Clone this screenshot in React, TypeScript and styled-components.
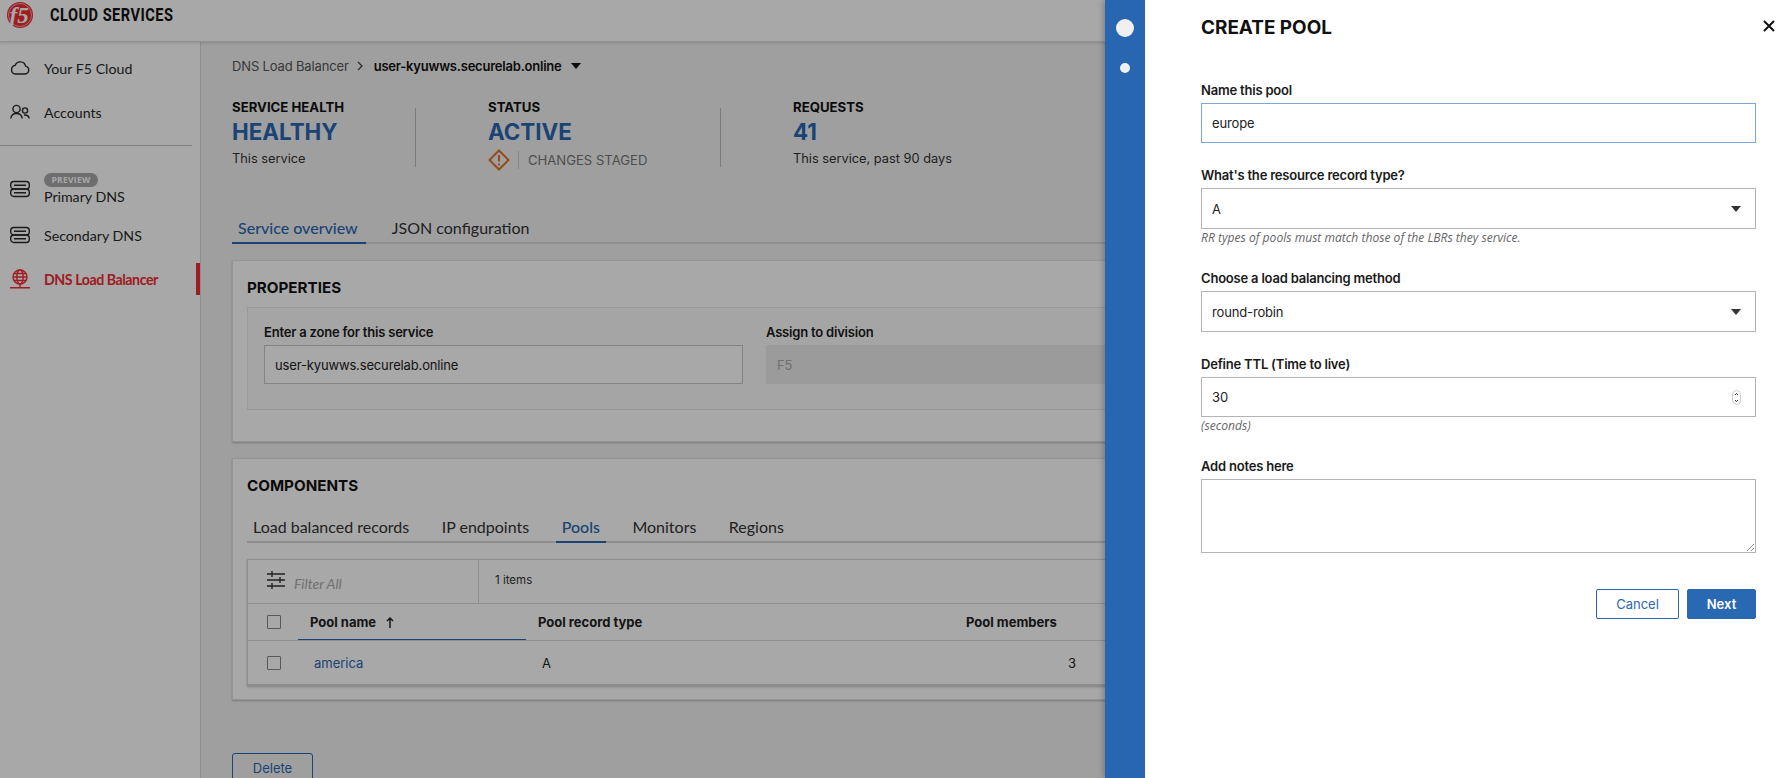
import React from "react"
import styled, { createGlobalStyle } from "styled-components"

const GlobalStyle = createGlobalStyle`
  html, body {
    margin: 0;
    height: 100%;
    overflow: hidden;
    background: #f2f2f2;
  }
  * { box-sizing: border-box; }
`

const BODY_FONT = `"Open Sans", "Noto Sans", sans-serif`
const HEAD_FONT = `Inter, "Noto Sans", sans-serif`
const NAV_FONT = `Lato, "Open Sans", sans-serif`

const Shell = styled.div`
  width: 100%;
  height: 778px;
  display: flex;
  flex-direction: column;
  overflow: hidden;
  color: #222;
`

const TopBar = styled.header`
  height: 42px;
  flex: none;
  background: #fff;
  border-bottom: 1px solid #dcdcdc;
  box-shadow: 0 1px 3px rgba(0,0,0,0.15);
  display: flex;
  align-items: flex-start;
  padding: 2px 0 0 7px;
  gap: 17px;
  position: relative;
  z-index: 1;
`

const Logo = styled.svg`
  width: 26px;
  height: 26px;
  flex: none;
`

const Brand = styled.div`
  font-family: "Roboto", sans-serif;
  font-weight: 700;
  font-size: 18px;
  letter-spacing: 0.6px;
  line-height: 26px;
  color: #111;
  transform: scaleX(0.81);
  transform-origin: left center;
`

const Body = styled.div`
  flex: 1;
  display: flex;
  min-height: 0;
`

const Sidebar = styled.nav`
  width: 201px;
  flex: none;
  background: #ffffff;
  border-right: 1px solid #d8d8d8;
  padding-top: 4px;
  display: flex;
  flex-direction: column;
`

const NavItem = styled.div<{ $active?: boolean; $h: number; $top?: number }>`
  height: ${p => p.$h}px;
  margin-top: ${p => p.$top ?? 0}px;
  padding-left: 10px;
  display: flex;
  align-items: center;
  gap: 14px;
  font-family: ${NAV_FONT};
  font-size: 14.2px;
  font-weight: ${p => (p.$active ? 700 : 400)};
  color: ${p => (p.$active ? "#f02c33" : "#2a2a2a")};
  letter-spacing: ${p => (p.$active ? "-0.45px" : "0")};
  border-right: 4px solid ${p => (p.$active ? "#f02c33" : "transparent")};
`

const NavIcon = styled.svg`
  width: 20px;
  height: 20px;
  flex: none;
  fill: none;
  stroke: currentColor;
  stroke-width: 1.4;
`

const NavDivider = styled.hr`
  width: 192px;
  margin: 11px 0 21px;
  border: 0;
  border-top: 1px solid #c4c4c4;
`

const NavStack = styled.div`
  display: flex;
  flex-direction: column;
  align-items: flex-start;
  gap: 1px;
`

const PreviewBadge = styled.span`
  width: 54px;
  height: 14px;
  border-radius: 7px;
  background: #a8a8a8;
  color: #fff;
  font-family: ${BODY_FONT};
  font-size: 8.5px;
  font-weight: 700;
  letter-spacing: 0.3px;
  line-height: 14px;
  text-align: center;
`

const Main = styled.main`
  flex: 1;
  min-width: 0;
  padding: 14px 30px 0 31px;
`

const Crumbs = styled.div`
  height: 20px;
  display: flex;
  align-items: center;
  font-family: ${HEAD_FONT};
  font-size: 13px;
  letter-spacing: -0.15px;
  color: #555;
`

const CrumbCurrent = styled.span`
  color: #111;
  font-weight: 600;
  letter-spacing: -0.22px;
`

const CrumbChevron = styled.svg`
  width: 8px;
  height: 12px;
  margin: 0 10px 0 7px;
  fill: none;
  stroke: #444;
  stroke-width: 1.3;
`

const CrumbCaret = styled.span`
  width: 0;
  height: 0;
  margin-left: 9px;
  border-left: 5px solid transparent;
  border-right: 5px solid transparent;
  border-top: 6px solid #111;
`

const Stats = styled.section`
  display: flex;
  margin-top: 23px;
  height: 72px;
`

const Stat = styled.div<{ $w: number; $divided?: boolean }>`
  width: ${p => p.$w}px;
  flex: none;
  display: flex;
  flex-direction: column;
  ${p => p.$divided && "position: relative;"}
  &::after {
    content: "";
    display: ${p => (p.$divided ? "block" : "none")};
    position: absolute;
    top: 9px;
    right: 72px;
    bottom: 4px;
    width: 1px;
    background: #bdbdbd;
  }
`

const StatLabel = styled.div`
  font-family: ${HEAD_FONT};
  font-size: 13.2px;
  font-weight: 700;
  line-height: 16px;
  color: #111;
`

const StatValue = styled.div`
  margin-top: 2px;
  font-family: ${HEAD_FONT};
  font-size: 22.4px;
  font-weight: 700;
  line-height: 30px;
  color: #2968b2;
`

const StatNote = styled.div`
  margin-top: 2px;
  font-family: ${HEAD_FONT};
  font-size: 12.8px;
  line-height: 20px;
  color: #333;
`

const StagedRow = styled.div`
  display: flex;
  align-items: center;
  height: 26px;
  margin-top: 1px;
`

const StagedText = styled.span`
  font-family: ${HEAD_FONT};
  font-size: 13.1px;
  color: #777;
  margin-left: 8px;
  padding-left: 9px;
  border-left: 1px solid #ccc;
  line-height: 18px;
`

const TabBar = styled.div<{ $gap: number }>`
  display: flex;
  gap: ${p => p.$gap}px;
  border-bottom: 2px solid #d8d8d8;
  height: 32px;
  font-family: ${NAV_FONT};
  font-size: 16px;
`

const Tab = styled.div<{ $active?: boolean }>`
  padding: 0 6px;
  height: 32px;
  line-height: 32px;
  color: ${p => (p.$active ? "#2968b2" : "#333")};
  font-weight: ${p => (p.$active ? 500 : 400)};
  border-bottom: 2px solid ${p => (p.$active ? "#2968b2" : "transparent")};
  white-space: nowrap;
`

const OverviewTabs = styled(TabBar)`
  margin-top: 41px;
  ${Tab} {
    padding-right: 8px;
  }
`

const Card = styled.section<{ $top: number; $h: number }>`
  margin-top: ${p => p.$top}px;
  height: ${p => p.$h}px;
  background: #fff;
  border: 1px solid #e2e2e2;
  box-shadow: 0 1px 2px rgba(0,0,0,0.25);
  padding: 17px 14px 0;
`

const CardTitle = styled.h2`
  margin: 0;
  font-family: ${HEAD_FONT};
  font-size: 15.2px;
  font-weight: 700;
  line-height: 20px;
  color: #111;
`

const PropertiesBox = styled.div`
  margin-top: 9px;
  height: 103px;
  background: #fafafa;
  border: 1px solid #e8e8e8;
  padding: 15px 16px 0;
  display: grid;
  grid-template-columns: 479px 1fr;
  column-gap: 23px;
`

const FieldLabel = styled.label`
  display: block;
  font-family: ${HEAD_FONT};
  font-size: 13px;
  font-weight: 600;
  letter-spacing: -0.2px;
  line-height: 18px;
  color: #1a1a1a;
`

const ZoneInput = styled.div<{ $disabled?: boolean }>`
  margin-top: 4px;
  height: 39px;
  padding: 0 10px;
  display: flex;
  align-items: center;
  font-family: ${HEAD_FONT};
  font-size: 13px;
  letter-spacing: -0.15px;
  color: ${p => (p.$disabled ? "#aaa" : "#222")};
  background: ${p => (p.$disabled ? "#ececec" : "#fff")};
  border: 1px solid ${p => (p.$disabled ? "#ececec" : "#c8c8c8")};
`

const ComponentTabs = styled(TabBar)`
  margin-top: 15px;
`

const DataTable = styled.div`
  margin-top: 16px;
  border: 1px solid #d8d8d8;
  box-shadow: 0 1px 2px rgba(0,0,0,0.25);
  background: #fff;
`

const FilterRow = styled.div`
  height: 44px;
  display: flex;
  border-bottom: 1px solid #d8d8d8;
`

const FilterCell = styled.div`
  width: 231px;
  border-right: 1px solid #d8d8d8;
  display: flex;
  align-items: center;
  padding-left: 19px;
  gap: 9px;
`

const FilterIcon = styled.svg`
  width: 18px;
  height: 20px;
  margin-top: -4px;
  stroke: #333;
  stroke-width: 1.4;
  fill: none;
`

const FilterHint = styled.span`
  font-family: ${NAV_FONT};
  font-style: italic;
  font-size: 14px;
  color: #aaa;
  margin-top: 4px;
`

const ItemCount = styled.div`
  display: flex;
  align-items: center;
  padding-left: 16px;
  margin-top: -3px;
  font-family: ${HEAD_FONT};
  font-size: 11.5px;
  color: #333;
`

const GridRow = styled.div<{ $head?: boolean }>`
  display: grid;
  grid-template-columns: 50px 240px 428px 1fr;
  height: ${p => (p.$head ? 37 : 44)}px;
  align-items: center;
  border-bottom: 1px solid #d8d8d8;
  font-family: ${HEAD_FONT};
  font-size: 13px;
  font-weight: ${p => (p.$head ? 700 : 400)};
  color: #222;
`

const CheckCell = styled.div`
  padding-left: 19px;
  display: flex;
`

const CheckBox = styled.span`
  width: 14px;
  height: 14px;
  border: 1px solid #888;
  border-radius: 1px;
  background: #fff;
`

const SortedHead = styled.div`
  height: 100%;
  margin-right: 12px;
  display: flex;
  align-items: center;
  gap: 9px;
  padding-left: 12px;
  border-bottom: 1px solid #2968b2;
`

const SortArrow = styled.svg`
  width: 10px;
  height: 12px;
  fill: none;
  stroke: #222;
  stroke-width: 1.5;
`

const NameLink = styled.a`
  color: #2968b2;
  padding-left: 16px;
`

const TextCell = styled.div<{ $pad?: number }>`
  padding-left: ${p => p.$pad ?? 0}px;
`

const MembersCell = styled.div<{ $number?: boolean }>`
  width: 110px;
  text-align: ${p => (p.$number ? "right" : "left")};
`

const DeleteButton = styled.button`
  display: block;
  margin-top: 53px;
  width: 81px;
  height: 29px;
  border: 1px solid #2968b2;
  border-radius: 3px;
  background: transparent;
  color: #2968b2;
  font-family: ${HEAD_FONT};
  font-size: 13px;
`

const Scrim = styled.div`
  position: fixed;
  inset: 0;
  z-index: 2;
  background: rgba(0,0,0,0.34);
`

const Drawer = styled.aside`
  position: fixed;
  top: 0;
  right: 0;
  bottom: 0;
  z-index: 3;
  width: 684px;
  display: flex;
  box-shadow: -2px 0 6px rgba(0,0,0,0.25);
`

const Rail = styled.div`
  width: 40px;
  flex: none;
  background: #2866b1;
  display: flex;
  flex-direction: column;
  align-items: center;
  padding-top: 19px;
  gap: 26px;
`

const RailDot = styled.span<{ $size: number }>`
  width: ${p => p.$size}px;
  height: ${p => p.$size}px;
  border-radius: 50%;
  background: #f0f0f0;
`

const Panel = styled.div`
  flex: 1;
  background: #fff;
  padding: 16px 33px 0 56px;
  position: relative;
`

const PanelTitle = styled.h1`
  margin: 0 0 41px;
  font-family: ${HEAD_FONT};
  font-size: 18.9px;
  font-weight: 700;
  line-height: 24px;
  color: #111;
`

const CloseButton = styled.svg`
  position: absolute;
  top: 20px;
  right: 14px;
  width: 12px;
  height: 12px;
  stroke: #111;
  stroke-width: 2;
`

const Field = styled.div<{ $gap: number }>`
  margin-bottom: ${p => p.$gap}px;
`

const Control = styled.div<{ $h: number; $focus?: boolean }>`
  margin-top: 4px;
  height: ${p => p.$h}px;
  padding: 0 10px;
  display: flex;
  align-items: center;
  justify-content: space-between;
  font-family: ${HEAD_FONT};
  font-size: 13px;
  letter-spacing: -0.15px;
  color: #222;
  background: #fff;
  border: 1px solid ${p => (p.$focus ? "#7ba7d6" : "#b4b4b4")};
`

const SelectCaret = styled.span`
  width: 0;
  height: 0;
  margin-right: 4px;
  border-left: 5.5px solid transparent;
  border-right: 5.5px solid transparent;
  border-top: 6px solid #333;
`

const Stepper = styled.svg`
  width: 9px;
  height: 15px;
  margin-right: 4px;
  fill: none;
  stroke: #333;
  stroke-width: 1;
`

const Hint = styled.div`
  margin-top: 2px;
  height: 14px;
  font-family: ${BODY_FONT};
  font-style: italic;
  font-size: 12.1px;
  line-height: 14px;
  color: #666;
`

const NotesControl = styled(Control)`
  position: relative;
`

const ResizeGrip = styled.svg`
  position: absolute;
  right: 1px;
  bottom: 1px;
  width: 8px;
  height: 8px;
  stroke: #777;
  stroke-width: 0.8;
`

const Actions = styled.div`
  display: flex;
  justify-content: flex-end;
  gap: 8px;
  margin-top: 36px;
`

const ActionButton = styled.button<{ $primary?: boolean }>`
  height: 30px;
  width: ${p => (p.$primary ? 69 : 83)}px;
  border-radius: 2px;
  border: 1px solid #2968b2;
  background: ${p => (p.$primary ? "#2968b2" : "#fff")};
  color: ${p => (p.$primary ? "#fff" : "#2968b2")};
  font-family: ${HEAD_FONT};
  font-size: 13px;
  font-weight: ${p => (p.$primary ? 600 : 400)};
`

const ServerIcon = () => (
  <NavIcon viewBox="0 0 20 20">
    <rect x="0.7" y="2.500" width="18.600" height="7.500" rx="3.200" />
    <rect x="0.7" y="10" width="18.600" height="7.500" rx="3.200" />
    <path d="M4 6.200h12M4 13.800h12" />
  </NavIcon>
)

export default function App() {
  return (
    <>
      <GlobalStyle />
      <Shell>
        <TopBar>
          <Logo viewBox="0 0 26 26">
            <circle cx="13" cy="13" r="13" fill="#f02c33" />
            <circle cx="13" cy="13" r="11.500" fill="none" stroke="#fff" strokeWidth="0.6" />
            <text x="2.500" y="21" fontFamily="Liberation Serif, serif" fontStyle="italic" fontWeight="700" fontSize="23" fill="#fff">f5</text>
          </Logo>
          <Brand>CLOUD SERVICES</Brand>
        </TopBar>
        <Body>
          <Sidebar>
            <NavItem $h={44}>
              <NavIcon viewBox="0 0 20 20">
                <path d="M5 16h10a4 4 0 0 0 .6-7.900A5.500 5.500 0 0 0 5.100 7.400 4.400 4.400 0 0 0 5 16z" />
              </NavIcon>
              Your F5 Cloud
            </NavItem>
            <NavItem $h={44}>
              <NavIcon viewBox="0 0 20 20">
                <circle cx="6.500" cy="7" r="3.600" />
                <path d="M0.800 16.500c.4-3.500 2.500-5 5.700-5s5.300 1.500 5.700 5" />
                <circle cx="15" cy="8.500" r="2.600" />
                <path d="M14 13c2.800-.3 4.800.8 5.200 3.500" />
              </NavIcon>
              Accounts
            </NavItem>
            <NavDivider />
            <NavItem $h={44}>
              <ServerIcon />
              <NavStack>
                <PreviewBadge>PREVIEW</PreviewBadge>
                Primary DNS
              </NavStack>
            </NavItem>
            <NavItem $h={34} $top={7}>
              <ServerIcon />
              Secondary DNS
            </NavItem>
            <NavItem $h={32} $active $top={11}>
              <NavIcon viewBox="0 0 20 20">
                <circle cx="10" cy="8" r="7" />
                <ellipse cx="10" cy="8" rx="3.200" ry="7" />
                <path d="M3 8h14M4 4.500h12M4 11.500h12M10 15v3.500M0 18.800h20" />
              </NavIcon>
              DNS Load Balancer
            </NavItem>
          </Sidebar>
          <Main>
            <Crumbs>
              DNS Load Balancer
              <CrumbChevron viewBox="0 0 8 12"><path d="M2 2l4 4-4 4" /></CrumbChevron>
              <CrumbCurrent>user-kyuwws.securelab.online</CrumbCurrent>
              <CrumbCaret />
            </Crumbs>
            <Stats>
              <Stat $w={256} $divided>
                <StatLabel>SERVICE HEALTH</StatLabel>
                <StatValue>HEALTHY</StatValue>
                <StatNote>This service</StatNote>
              </Stat>
              <Stat $w={305} $divided>
                <StatLabel>STATUS</StatLabel>
                <StatValue>ACTIVE</StatValue>
                <StagedRow>
                  <svg width="22" height="22" viewBox="0 0 22 22" fill="none" stroke="#e0732a" strokeWidth="2">
                    <path d="M11 1.500 20.500 11 11 20.500 1.500 11z" />
                    <path d="M11 6v6.500M11 14.500v2" />
                  </svg>
                  <StagedText>CHANGES STAGED</StagedText>
                </StagedRow>
              </Stat>
              <Stat $w={300}>
                <StatLabel>REQUESTS</StatLabel>
                <StatValue>41</StatValue>
                <StatNote>This service, past 90 days</StatNote>
              </Stat>
            </Stats>
            <OverviewTabs $gap={20}>
              <Tab $active>Service overview</Tab>
              <Tab>JSON configuration</Tab>
            </OverviewTabs>
            <Card $top={16} $h={182}>
              <CardTitle>PROPERTIES</CardTitle>
              <PropertiesBox>
                <div>
                  <FieldLabel>Enter a zone for this service</FieldLabel>
                  <ZoneInput>user-kyuwws.securelab.online</ZoneInput>
                </div>
                <div>
                  <FieldLabel>Assign to division</FieldLabel>
                  <ZoneInput $disabled>F5</ZoneInput>
                </div>
              </PropertiesBox>
            </Card>
            <Card $top={16} $h={242}>
              <CardTitle>COMPONENTS</CardTitle>
              <ComponentTabs $gap={20.5}>
                <Tab>Load balanced records</Tab>
                <Tab>IP endpoints</Tab>
                <Tab $active>Pools</Tab>
                <Tab>Monitors</Tab>
                <Tab>Regions</Tab>
              </ComponentTabs>
              <DataTable>
                <FilterRow>
                  <FilterCell>
                    <FilterIcon viewBox="0 0 18 20">
                      <path d="M0 4h18M0 10h18M0 16h18M5 1v6M13 7v6M5 13v6" />
                    </FilterIcon>
                    <FilterHint>Filter All</FilterHint>
                  </FilterCell>
                  <ItemCount>1 items</ItemCount>
                </FilterRow>
                <GridRow $head>
                  <CheckCell><CheckBox /></CheckCell>
                  <SortedHead>
                    Pool name
                    <SortArrow viewBox="0 0 10 12"><path d="M5 12V2M2 5l3-3 3 3" /></SortArrow>
                  </SortedHead>
                  <TextCell>Pool record type</TextCell>
                  <MembersCell>Pool members</MembersCell>
                </GridRow>
                <GridRow>
                  <CheckCell><CheckBox /></CheckCell>
                  <NameLink>america</NameLink>
                  <TextCell $pad={4}>A</TextCell>
                  <MembersCell $number>3</MembersCell>
                </GridRow>
              </DataTable>
            </Card>
            <DeleteButton>Delete</DeleteButton>
          </Main>
        </Body>
      </Shell>
      <Scrim />
      <Drawer>
        <Rail>
          <RailDot $size={18} />
          <RailDot $size={10} />
        </Rail>
        <Panel>
          <PanelTitle>CREATE POOL</PanelTitle>
          <CloseButton viewBox="0 0 12 12"><path d="M1 1l10 10M11 1 1 11" /></CloseButton>
          <Field $gap={23}>
            <FieldLabel>Name this pool</FieldLabel>
            <Control $h={40} $focus>europe</Control>
          </Field>
          <Field $gap={24}>
            <FieldLabel>What's the resource record type?</FieldLabel>
            <Control $h={41}>A<SelectCaret /></Control>
            <Hint>RR types of pools must match those of the LBRs they service.</Hint>
          </Field>
          <Field $gap={23}>
            <FieldLabel>Choose a load balancing method</FieldLabel>
            <Control $h={41}>round-robin<SelectCaret /></Control>
          </Field>
          <Field $gap={24}>
            <FieldLabel>Define TTL (Time to live)</FieldLabel>
            <Control $h={40}>
              30
              <Stepper viewBox="0 0 9 15">
                <rect x="0.500" y="0.500" width="8" height="14" rx="4" stroke="#ccc" />
                <path d="M3 5l1.500-1.500L6 5M3 10l1.500 1.500L6 10" />
              </Stepper>
            </Control>
            <Hint>(seconds)</Hint>
          </Field>
          <Field $gap={0}>
            <FieldLabel>Add notes here</FieldLabel>
            <NotesControl $h={74}>
              <ResizeGrip viewBox="0 0 8 8"><path d="M1 8l7-7M5 8l3-3" /></ResizeGrip>
            </NotesControl>
          </Field>
          <Actions>
            <ActionButton>Cancel</ActionButton>
            <ActionButton $primary>Next</ActionButton>
          </Actions>
        </Panel>
      </Drawer>
    </>
  )
}
